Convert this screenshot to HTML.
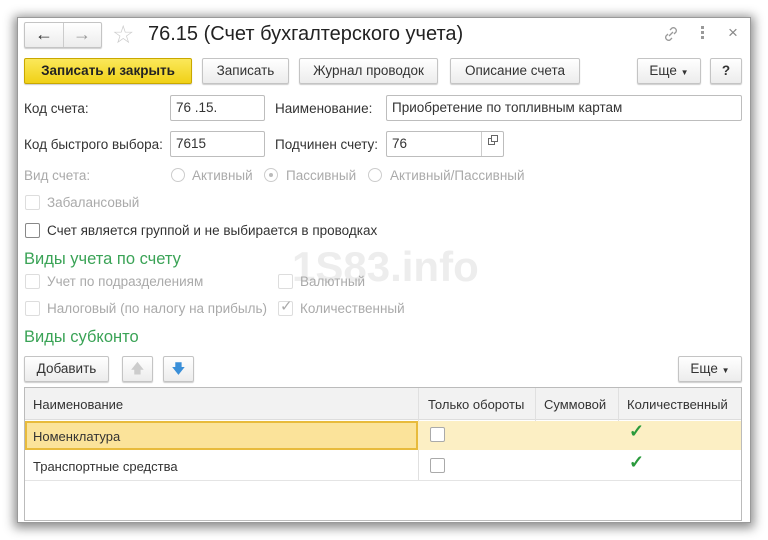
<!DOCTYPE html><html><head><meta charset="utf-8"><style>
*{box-sizing:border-box;margin:0;padding:0}
body{width:768px;height:540px;background:#fff;font-family:"Liberation Sans",sans-serif;font-size:13.5px;color:#333;position:relative;overflow:hidden}
.a{position:absolute;white-space:nowrap}
.win{position:absolute;left:17px;top:17px;width:734px;height:506px;background:#fff;border:1px solid #9a9a9a;box-shadow:0 2px 10px 3px rgba(0,0,0,.45)}
.btn{position:absolute;height:26px;border:1px solid #c4c4c4;border-radius:2px;background:linear-gradient(#fff,#ececec);box-shadow:0 1px 1px rgba(0,0,0,.2);text-align:center;line-height:24px;font-size:13.5px;color:#333}
.inp{position:absolute;height:26px;border:1px solid #bdbdbd;border-radius:2px;background:#fff;padding-left:5px;line-height:24px;font-size:13.5px;color:#333}
.cb{position:absolute;width:15px;height:15px;border:1px solid #bbb;border-radius:2px;background:#fff}
.dis{color:#aaa}
.rb{position:absolute;width:14px;height:14px;border:1px solid #ccc;border-radius:50%}
.g{color:#3aa356;font-size:16.5px}
.t{font-size:13px}
</style></head><body>
<div class="win"></div>
<div class="btn" style="left:24px;top:22px;width:78px;height:26px"></div>
<div class="a" style="left:63px;top:23px;width:1px;height:24px;background:#ccc"></div>
<div class="a" style="left:35px;top:24px;font-size:18px;color:#333;font-weight:bold">&#8592;</div>
<div class="a" style="left:73px;top:24px;font-size:18px;color:#999;font-weight:bold">&#8594;</div>
<div class="a" style="left:112px;top:20px;font-size:25px;color:#ccc">&#9734;</div>
<div class="a" style="left:148px;top:23px;font-size:20px;color:#222">76.15 (Счет бухгалтерского учета)</div>
<svg class="a" style="left:661px;top:24px" width="20" height="20" viewBox="0 0 20 20"><g fill="none" stroke="#999" stroke-width="1.3"><path d="M9 6l2-2a3 3 0 014 4l-2 2M11 14l-2 2a3 3 0 01-4-4l2-2M8 12l4-4"/></g></svg>
<div class="a" style="left:701px;top:26px;width:3px;height:3px;background:#999;box-shadow:0 5px #999,0 10px #999"></div>
<div class="a" style="left:728px;top:23px;font-size:17px;color:#888">×</div>

<div class="btn" style="left:24px;top:58px;width:168px;background:linear-gradient(#fbe85a,#f0d117);border-color:#c9a800;font-weight:bold;color:#222">Записать и закрыть</div>
<div class="btn" style="left:202px;top:58px;width:87px">Записать</div>
<div class="btn" style="left:299px;top:58px;width:139px">Журнал проводок</div>
<div class="btn" style="left:450px;top:58px;width:130px">Описание счета</div>
<div class="btn" style="left:637px;top:58px;width:64px">Еще <span style="font-size:8px">▼</span></div>
<div class="btn" style="left:710px;top:58px;width:32px;font-weight:bold">?</div>

<div class="a" style="left:24px;top:101px">Код счета:</div>
<div class="inp" style="left:170px;top:95px;width:95px">76 .15.</div>
<div class="a" style="left:275px;top:101px">Наименование:</div>
<div class="inp" style="left:386px;top:95px;width:356px">Приобретение по топливным картам</div>
<div class="a" style="left:24px;top:137px">Код быстрого выбора:</div>
<div class="inp" style="left:170px;top:131px;width:95px">7615</div>
<div class="a" style="left:275px;top:137px">Подчинен счету:</div>
<div class="inp" style="left:386px;top:131px;width:118px">76</div>
<div class="a" style="left:481px;top:132px;width:1px;height:24px;background:#ccc"></div>
<div class="a" style="left:488px;top:138px;width:7px;height:7px;border:1px solid #666"></div>
<div class="a" style="left:491px;top:135px;width:7px;height:7px;border:1px solid #666;background:#fff"></div>

<div class="a dis" style="left:24px;top:168px">Вид счета:</div>
<div class="rb" style="left:171px;top:168px"></div><div class="a dis" style="left:192px;top:168px">Активный</div>
<div class="rb" style="left:264px;top:168px"></div><div class="a" style="left:269px;top:173px;width:4px;height:4px;border-radius:50%;background:#bbb"></div><div class="a dis" style="left:286px;top:168px">Пассивный</div>
<div class="rb" style="left:368px;top:168px"></div><div class="a dis" style="left:390px;top:168px">Активный/Пассивный</div>

<div class="cb" style="left:25px;top:195px;border-color:#ddd"></div><div class="a dis" style="left:47px;top:195px">Забалансовый</div>
<div class="cb" style="left:25px;top:223px;border-color:#888"></div><div class="a" style="left:47px;top:223px;color:#333">Счет является группой и не выбирается в проводках</div>
<div class="a g" style="left:24px;top:250px">Виды учета по счету</div>
<div class="a" style="left:292px;top:243px;font-size:42px;font-weight:bold;color:#ededed">1S83.info</div>
<div class="cb" style="left:25px;top:274px;border-color:#ddd"></div><div class="a dis" style="left:47px;top:274px">Учет по подразделениям</div>
<div class="cb" style="left:278px;top:274px;border-color:#ddd"></div><div class="a dis" style="left:300px;top:274px">Валютный</div>
<div class="cb" style="left:25px;top:301px;border-color:#ddd"></div><div class="a dis" style="left:47px;top:301px">Налоговый (по налогу на прибыль)</div>
<div class="cb" style="left:278px;top:301px;border-color:#ddd"></div><div class="a" style="left:280px;top:297px;color:#aaa;font-size:15px">✓</div><div class="a dis" style="left:300px;top:301px">Количественный</div>
<div class="a g" style="left:24px;top:328px">Виды субконто</div>

<div class="btn" style="left:24px;top:356px;width:85px">Добавить</div>
<div class="btn" style="left:122px;top:356px;width:31px;color:#ccc">&#129093;</div>
<div class="btn" style="left:163px;top:356px;width:31px;color:#3a8fd8">&#129095;</div>
<div class="btn" style="left:678px;top:356px;width:64px">Еще <span style="font-size:8px">▼</span></div>

<div class="a" style="left:24px;top:387px;width:718px;height:134px;border:1px solid #bbb;background:#fff"></div>
<div class="a" style="left:25px;top:388px;width:716px;height:32px;background:#f2f2f2;border-bottom:1px solid #ddd"></div>
<div class="a" style="left:418px;top:388px;width:1px;height:92px;background:#e0e0e0"></div>
<div class="a" style="left:535px;top:388px;width:1px;height:62px;background:#e0e0e0"></div>
<div class="a" style="left:618px;top:388px;width:1px;height:62px;background:#e0e0e0"></div>
<div class="a t" style="left:33px;top:397px">Наименование</div>
<div class="a t" style="left:428px;top:397px">Только обороты</div>
<div class="a t" style="left:544px;top:397px">Суммовой</div>
<div class="a t" style="left:627px;top:397px">Количественный</div>
<div class="a" style="left:25px;top:421px;width:716px;height:29px;background:#fcefc4"></div>
<div class="a" style="left:25px;top:421px;width:393px;height:29px;background:#fbe39a;border:2px solid #e8bb3c"></div>
<div class="a t" style="left:33px;top:429px">Номенклатура</div>
<div class="a" style="left:25px;top:480px;width:716px;height:1px;background:#e4e4e4"></div>
<div class="a t" style="left:33px;top:459px">Транспортные средства</div>
<div class="cb" style="left:430px;top:427px;border-color:#aaa"></div>
<div class="cb" style="left:430px;top:458px;border-color:#aaa"></div>
<div class="a" style="left:629px;top:421px;color:#2a9a3c;font-size:18px;font-weight:bold">✓</div>
<div class="a" style="left:629px;top:452px;color:#2a9a3c;font-size:18px;font-weight:bold">✓</div>
</body></html>
